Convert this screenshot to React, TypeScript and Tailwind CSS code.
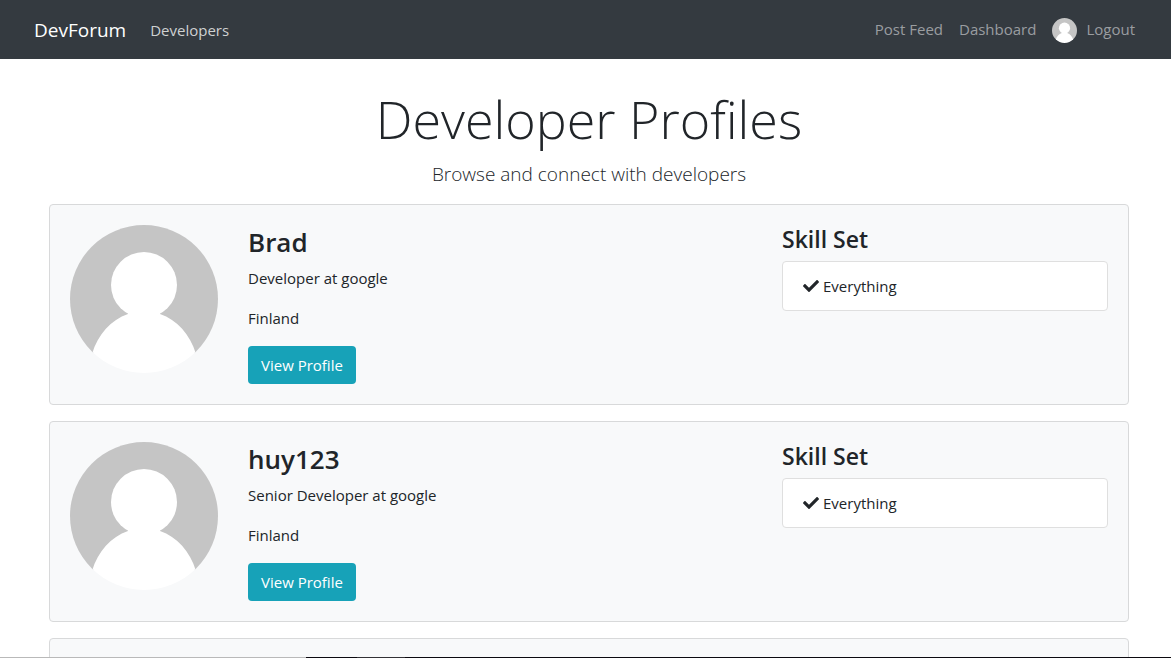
import { FaCheck } from "react-icons/fa";

interface Profile {
  name: string;
  role: string;
  location: string;
  skills: string[];
}

const profiles: Profile[] = [
  { name: "Brad", role: "Developer at google", location: "Finland", skills: ["Everything"] },
  { name: "huy123", role: "Senior Developer at google", location: "Finland", skills: ["Everything"] },
];

function Avatar({ className }: { className: string }) {
  return (
    <svg viewBox="0 0 148 148" className={className} role="img" aria-label="Avatar">
      <defs>
        <clipPath id="avatar-circle">
          <circle cx="74" cy="74" r="74" />
        </clipPath>
      </defs>
      <g clipPath="url(#avatar-circle)">
        <rect width="148" height="128" fill="#c5c5c5" />
        <circle cx="74" cy="60" r="33" fill="#fff" />
        <path
          d="M22 129C28 109 41 95 58 89V86H90V89C107 95 120 109 126 129V148H22Z"
          fill="#fff"
        />
      </g>
    </svg>
  );
}

function Navbar() {
  return (
    <nav className="flex h-[59px] items-center justify-between bg-[#343a40] pr-9 pl-[34px] text-[15px]">
      <div className="flex items-center gap-6">
        <a href="#home" className="text-[19px] leading-8 text-white">
          DevForum
        </a>
        <a href="#developers" className="leading-6 text-[#cfd1d2]">
          Developers
        </a>
      </div>
      <div className="flex items-center gap-4 pb-0.5 leading-6 text-[#9a9da0]">
        <a href="#feed">Post Feed</a>
        <a href="#dashboard">Dashboard</a>
        <a href="#logout" className="flex items-center gap-[9px]">
          <Avatar className="mt-1 size-[25px]" />
          Logout
        </a>
      </div>
    </nav>
  );
}

function ProfileCard({ profile }: { profile: Profile }) {
  return (
    <article className="grid grid-cols-12 items-start gap-x-[30px] rounded border border-[#d8d9da] bg-[#f8f9fa] p-5">
      <Avatar className="col-span-2 w-full" />
      <div className="col-span-6">
        <h2 className="mb-1.5 text-[26px] leading-[35px] font-semibold">{profile.name}</h2>
        <p className="mb-4">{profile.role}</p>
        <p className="mb-4">{profile.location}</p>
        <a
          href="#profile"
          className="inline-block rounded bg-[#17a2b8] px-[13px] py-[7px] align-top text-white"
        >
          View Profile
        </a>
      </div>
      <div className="col-span-4">
        <h3 className="mb-2 text-[23px] leading-7 font-semibold">Skill Set</h3>
        <ul className="rounded border border-[#dfdfdf] bg-white">
          {profile.skills.map((skill) => (
            <li key={skill} className="flex items-center gap-1 px-5 py-3">
              <FaCheck className="size-4" />
              {skill}
            </li>
          ))}
        </ul>
      </div>
    </article>
  );
}

export default function App() {
  return (
    <div className="h-screen overflow-hidden bg-white font-['Open_Sans',sans-serif] text-[15px] leading-6 text-[#212529]">
      <Navbar />
      <main className="pt-[26px] pl-[7px]">
        <div className="mx-auto max-w-[1080px]">
          <h1 className="mb-[7px] text-center text-[52px] leading-[67px] font-light">
            Developer Profiles
          </h1>
          <p className="mb-[15px] text-center text-[19px] leading-[30px] font-light">
            Browse and connect with developers
          </p>
          <div className="flex flex-col gap-4">
            {profiles.map((profile) => (
              <ProfileCard key={profile.name} profile={profile} />
            ))}
            <article className="h-[201px] rounded border border-[#d8d9da] bg-[#f8f9fa]" />
          </div>
        </div>
      </main>
      <div className="fixed inset-x-0 bottom-0 flex h-px">
        <div className="w-[306px] bg-[#b9b9b9]" />
        <div className="w-[51px] bg-[#0c0a10]" />
        <div className="w-12 bg-[#333236]" />
        <div className="flex-1 bg-[#0c0a10]" />
      </div>
    </div>
  );
}
